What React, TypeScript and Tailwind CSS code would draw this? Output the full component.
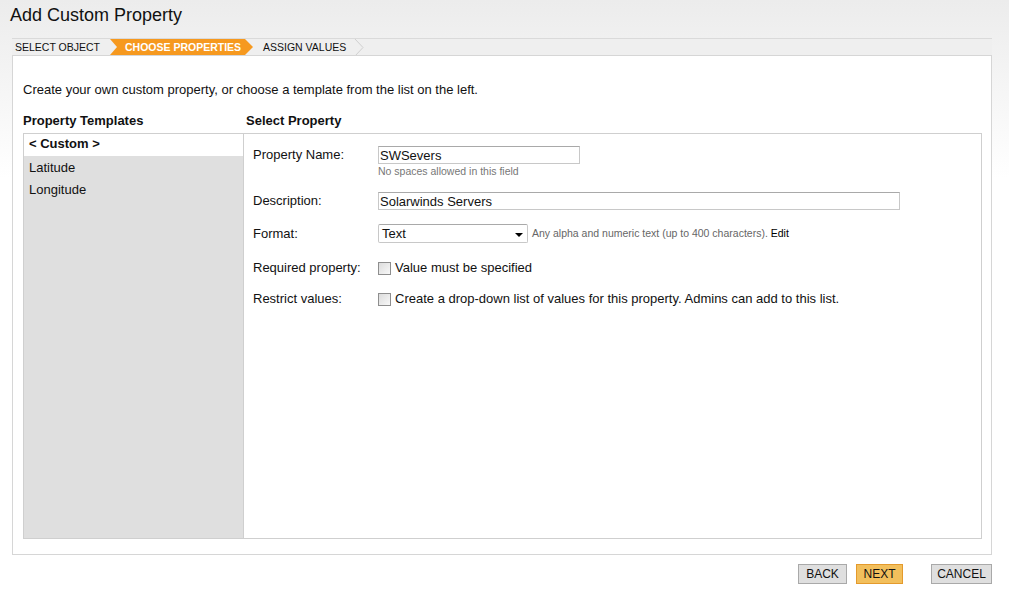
import React from 'react';

const templates = ['< Custom >', 'Latitude', 'Longitude'];

function Checkbox() {
  return (
    <span className="inline-block w-[13px] h-[13px] border border-[#8e8e8e] bg-gradient-to-br from-[#dcdcdc] to-[#f8f8f8] shrink-0" />
  );
}

function Chevron() {
  return (
    <svg width="10" height="17" viewBox="0 0 10 17" className="shrink-0">
      <polyline points="1,0 9,8.5 1,17" fill="none" stroke="#cfcfcf" strokeWidth="1" />
    </svg>
  );
}

export default function App() {
  return (
    <div className="min-h-[595px] w-full bg-gradient-to-b from-[#ececec] to-white to-[30%] font-['Liberation_Sans',Arial,sans-serif] text-[#111]">
      <div className="h-[595px] flex flex-col">
        {/* Title */}
        <h1 className="pl-[10px] pt-[4px] h-[38px] text-[18px] leading-[22px]">Add Custom Property</h1>

        {/* Steps */}
        <div className="ml-[12px] mr-[17px] h-[17px] bg-[#efefef] border-t border-[#dadada] flex items-center text-[10.5px] leading-none">
          <span className="pl-[3px] w-[98px]">SELECT OBJECT</span>
          <div className="h-[16px] w-[143px] bg-[#f6991f] text-white font-bold text-[10.5px] pl-[15px] flex items-center [clip-path:polygon(0_0,calc(100%-8px)_0,100%_50%,calc(100%-8px)_100%,0_100%,7px_50%)]">
            CHOOSE PROPERTIES
          </div>
          <span className="ml-[10px] w-[91px]">ASSIGN VALUES</span>
          <Chevron />
        </div>

        {/* Panel */}
        <div className="ml-[12px] mr-[17px] h-[500px] bg-white border border-[#d6d6d6] pl-[10px] pr-[9px] pb-[15px] flex flex-col">
          <p className="pt-[26px] text-[13px] leading-[15px]">
            Create your own custom property, or choose a template from the list on the left.
          </p>
          <div className="mt-[16px] flex text-[13px] font-bold leading-[16px]">
            <span className="w-[223px]">Property Templates</span>
            <span>Select Property</span>
          </div>
          <div className="mt-[4px] flex-1 flex border border-[#cfcfcf]">
            {/* Left list */}
            <div className="w-[220px] bg-[#dfdfdf] border-r border-[#cfcfcf] text-[13px]">
              {templates.map((t, i) => (
                <div
                  key={t}
                  className={
                    i === 0
                      ? 'h-[22px] leading-[20px] pl-[5px] bg-white font-bold'
                      : 'h-[22px] leading-[24px] pl-[5px]'
                  }
                >
                  {t}
                </div>
              ))}
            </div>

            {/* Form */}
            <div className="flex-1 pl-[9px] text-[13px]">
              <div className="mt-[12px] flex">
                <span className="w-[125px] leading-[18px]">Property Name:</span>
                <div>
                  <input
                    readOnly
                    value="SWSevers"
                    className="block w-[202px] h-[18px] border border-[#c8c8c8] border-t-[#a9a9a9] px-[1px] text-[13px] leading-[16px] outline-none"
                  />
                  <div className="text-[10.5px] text-[#777] leading-[12px] mt-[1px]">No spaces allowed in this field</div>
                </div>
              </div>

              <div className="mt-[15px] flex items-center">
                <span className="w-[125px] leading-[18px]">Description:</span>
                <input
                  readOnly
                  value="Solarwinds Servers"
                  className="block w-[522px] h-[18px] border border-[#c8c8c8] border-t-[#a9a9a9] px-[1px] text-[13px] leading-[16px] outline-none"
                />
              </div>

              <div className="mt-[14px] flex items-center">
                <span className="w-[125px] leading-[18px]">Format:</span>
                <div className="w-[150px] h-[19px] border border-[#c8c8c8] border-t-[#a9a9a9] rounded-[2px] flex items-center justify-between pl-[3px] pr-[4px]">
                  <span className="leading-[16px]">Text</span>
                  <span className="w-0 h-0 border-l-[4px] border-r-[4px] border-t-[4px] border-l-transparent border-r-transparent border-t-black mt-[2px]" />
                </div>
                <span className="ml-[4px] text-[10.5px] text-[#666]">
                  Any alpha and numeric text (up to 400 characters). <span className="text-black">Edit</span>
                </span>
              </div>

              <div className="mt-[16px] flex items-center h-[18px]">
                <span className="w-[125px]">Required property:</span>
                <Checkbox />
                <span className="ml-[4px]">Value must be specified</span>
              </div>

              <div className="mt-[13px] flex items-center h-[18px]">
                <span className="w-[125px]">Restrict values:</span>
                <Checkbox />
                <span className="ml-[4px]">Create a drop-down list of values for this property. Admins can add to this list.</span>
              </div>
            </div>
          </div>
        </div>

        {/* Buttons */}
        <div className="mt-[9px] flex justify-end pr-[17px] text-[12px]">
          <button className="w-[49px] h-[20px] bg-[#dfdfdf] border border-[#a9a9a9] leading-none">BACK</button>
          <button className="ml-[9px] w-[47px] h-[20px] bg-[#f2bf5c] border border-[#e49a2c] leading-none">NEXT</button>
          <button className="ml-[28px] w-[61px] h-[20px] bg-[#dfdfdf] border border-[#a9a9a9] leading-none">CANCEL</button>
        </div>
      </div>
    </div>
  );
}
